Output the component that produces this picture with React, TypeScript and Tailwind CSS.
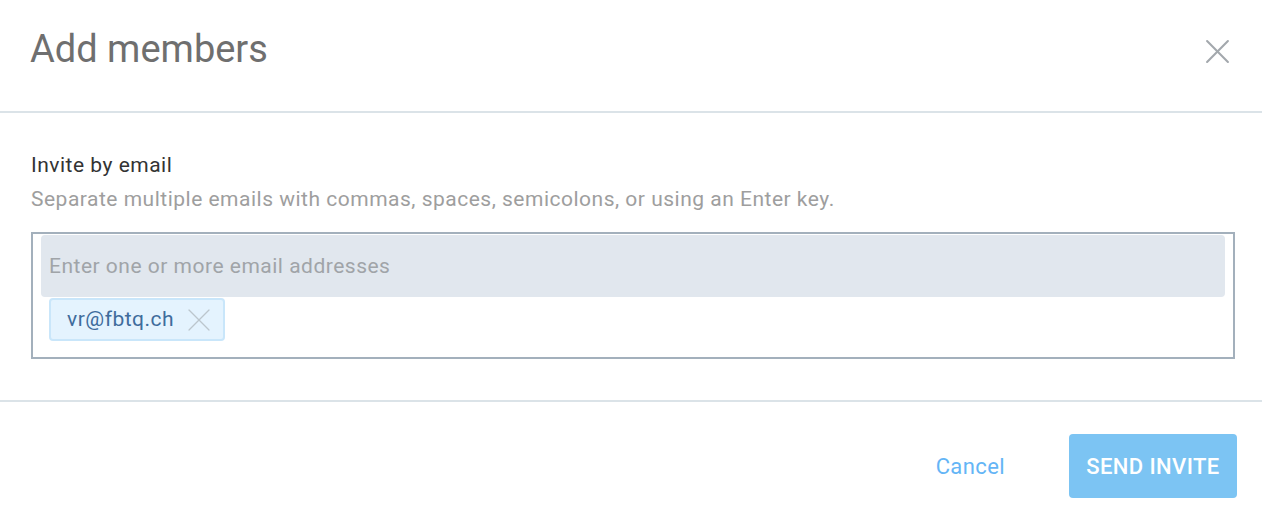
function CloseIcon({ size, stroke, className }: { size: number; stroke: number; className?: string }) {
  return (
    <svg width={size} height={size} viewBox="0 0 24 24" className={className} fill="none" stroke="currentColor" strokeWidth={stroke} strokeLinecap="round">
      <line x1="2" y1="2" x2="22" y2="22" />
      <line x1="22" y1="2" x2="2" y2="22" />
    </svg>
  );
}

export default function App() {
  return (
    <div className="h-[526px] w-[1262px] overflow-hidden bg-white font-['Roboto',sans-serif]">
      <div className="flex h-[113px] items-start justify-between border-b-2 border-[#dbe3e8] pl-[30px] pr-[32px] pt-[27px]">
        <h1 className="text-[38px] leading-[44px] text-[#6f6f6f]">Add members</h1>
        <button className="mt-[12px] text-[#a3a8ad]">
          <CloseIcon size={25} stroke={2} />
        </button>
      </div>

      <div className="h-[289px] border-b-2 border-[#dbe3e8] px-[31px] pt-[40px] tracking-[0.5px]">
        <div className="text-[21px] leading-[24px] text-[#333]">Invite by email</div>
        <div className="mt-[10px] text-[21px] leading-[24px] text-[#9e9e9e]">
          Separate multiple emails with commas, spaces, semicolons, or using an Enter key.
        </div>
        <div className="mt-[21px] h-[127px] w-[1204px] border-2 border-[#a3b0bc] px-[8px] pt-[1px]">
          <div className="flex h-[62px] items-center rounded-sm bg-[#e1e7ee] pl-[8px] pt-[2px] text-[21px] text-[#a0a4a8]">
            Enter one or more email addresses
          </div>
          <div className="pl-[8px] pt-[1px]">
            <span className="inline-flex h-[43px] w-[176px] items-center gap-[13px] rounded-sm border-2 border-[#c9e6fa] bg-[#e4f3fe] pl-[16px] text-[21px] text-[#3f6c9c]">
              vr@fbtq.ch
              <CloseIcon size={24} stroke={1.2} className="text-[#bcc6cd]" />
            </span>
          </div>
        </div>
      </div>

      <div className="flex items-center justify-end gap-[64px] pr-[25px] pt-[32px] tracking-[0.4px]">
        <button className="text-[22px] text-[#64b5f6]">Cancel</button>
        <button className="h-[64px] w-[168px] rounded-[4px] bg-[#7cc4f3] text-[22px] font-medium text-white">
          SEND INVITE
        </button>
      </div>
    </div>
  );
}
